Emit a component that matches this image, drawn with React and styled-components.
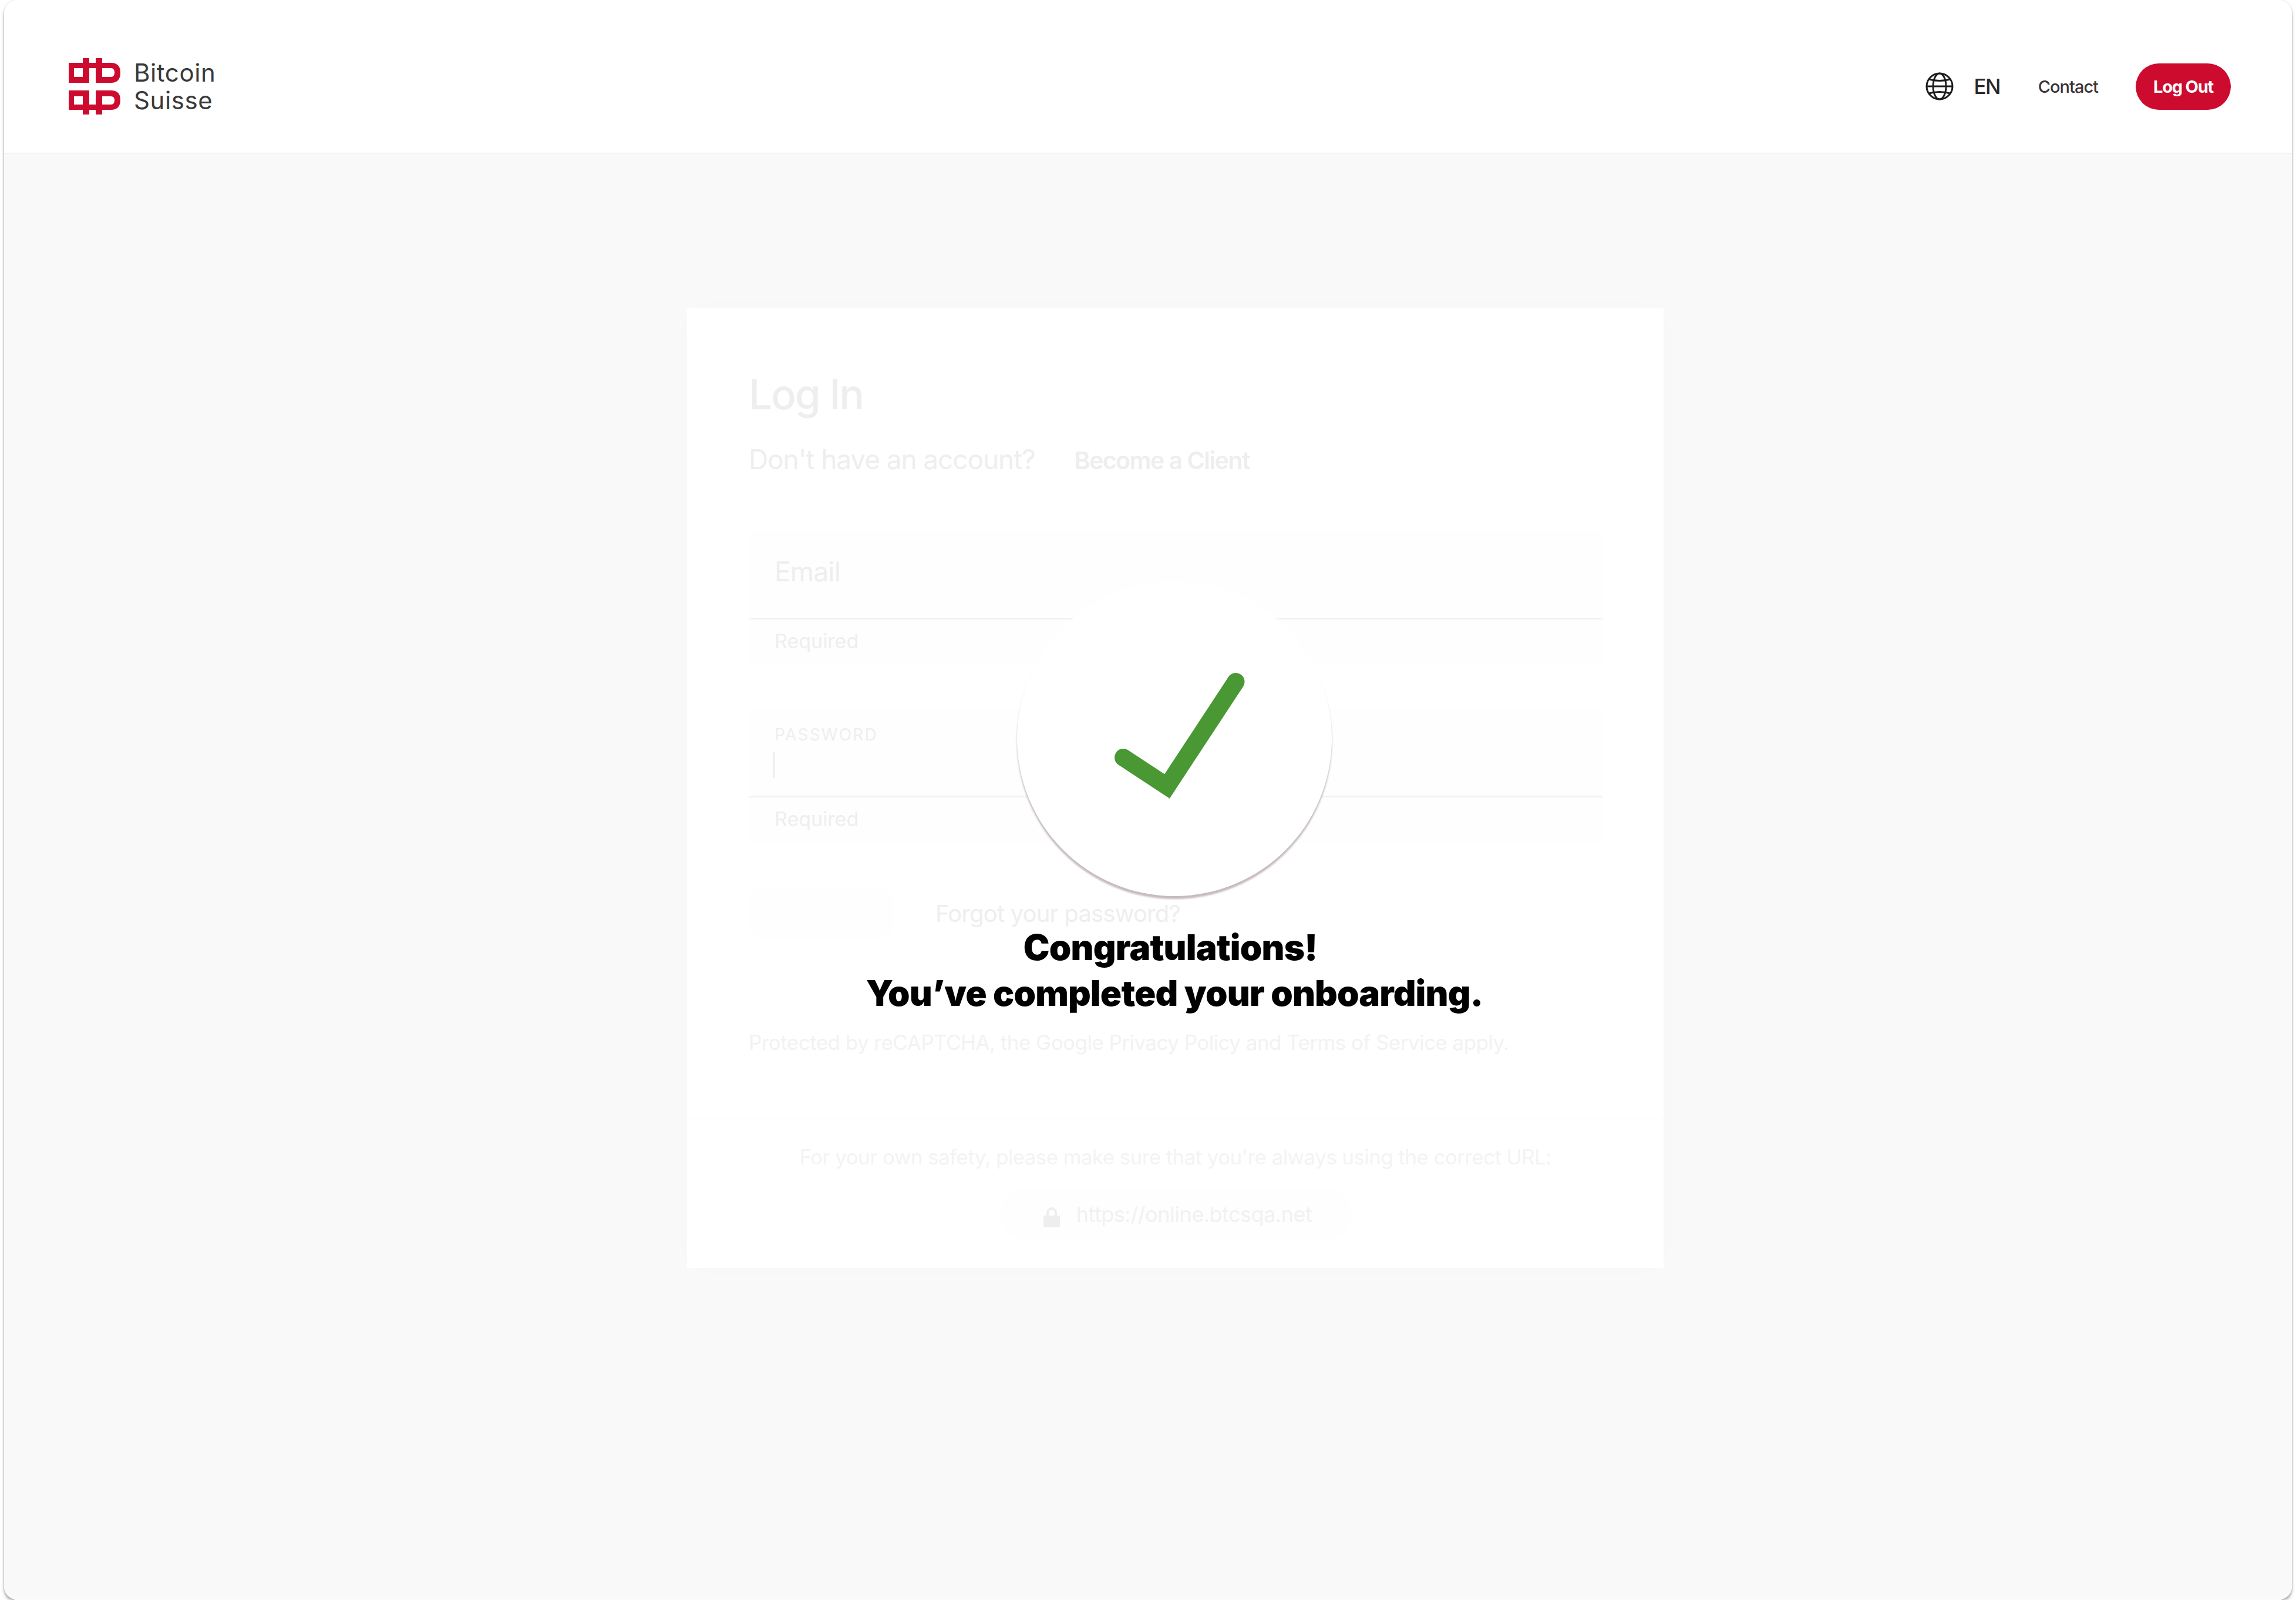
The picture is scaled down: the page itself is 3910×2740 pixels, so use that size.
import React from "react";
import styled, { createGlobalStyle } from "styled-components";

const GlobalStyle = createGlobalStyle`
  html, body {
    margin: 0;
    padding: 0;
    background: #ffffff;
  }
  body {
    font-family: Inter, "Liberation Sans", sans-serif;
  }
`;

const FrameShadow = styled.div`
  width: 3896px;
  height: 2724px;
  margin-left: 7px;
  border-radius: 22px;
  box-shadow: 0 5px 5px rgba(0, 0, 0, 0.3), 0 0 3px rgba(0, 0, 0, 0.2);
`;

const Frame = styled.div`
  position: relative;
  width: 100%;
  height: 100%;
  display: flex;
  flex-direction: column;
  border-radius: 22px;
  overflow: hidden;
  background: #f9f9f9;
`;

const Header = styled.header`
  height: 262px;
  flex: none;
  display: flex;
  align-items: center;
  padding: 34px 104px 0 110px;
  background: #ffffff;
  border-bottom: 2px solid #f3f3f3;
  box-sizing: border-box;
`;

const LogoMark = styled.svg`
  width: 88px;
  height: 96px;
  flex: none;
  display: block;
`;

const LogoText = styled.div`
  margin-left: 23px;
  font-size: 42px;
  line-height: 47px;
  letter-spacing: 0.6px;
  color: #3a3a3a;
`;

const HeaderRight = styled.nav`
  margin-left: auto;
  display: flex;
  align-items: center;
`;

const GlobeIcon = styled.svg`
  width: 50px;
  height: 50px;
  display: block;
`;

const Lang = styled.span`
  margin-left: 33px;
  font-size: 35px;
  font-weight: 500;
  letter-spacing: -1.7px;
  color: #2a2a2a;
`;

const ContactLink = styled.a`
  margin-left: 65px;
  font-size: 29px;
  font-weight: 500;
  letter-spacing: -1px;
  color: #3c3338;
`;

const LogOut = styled.button`
  margin-left: 64px;
  width: 162px;
  height: 79px;
  border: 0;
  border-radius: 40px;
  padding: 0;
  font-family: inherit;
  font-size: 29px;
  font-weight: 700;
  letter-spacing: -1.2px;
  color: #ffffff;
  background: #cd0b2f;
`;

const Main = styled.main`
  flex: 1;
  padding: 263px 0 0 1163px;
`;

const Card = styled.section`
  width: 1663px;
  height: 1634px;
  box-sizing: border-box;
  background: #ffffff;
  color: #efeeee;
  box-shadow: 0 0 60px rgba(0, 0, 0, 0.012);
  display: flex;
  flex-direction: column;
`;

const CardBody = styled.div`
  flex: 1;
  padding: 102px 104px 0 105px;
`;

const Title = styled.h1`
  margin: 0;
  font-size: 71px;
  line-height: 88px;
  font-weight: 500;
  letter-spacing: -2.2px;
`;

const SignupRow = styled.div`
  margin-top: 39px;
  display: flex;
  align-items: baseline;
  gap: 67px;
`;

const SignupText = styled.span`
  font-size: 46px;
  line-height: 56px;
  letter-spacing: -1.1px;
`;

const SignupLink = styled.a`
  font-size: 41px;
  font-weight: 600;
  letter-spacing: -1.5px;
`;

const Field = styled.div`
  height: 152px;
  margin-top: ${(p) => p.$top}px;
  padding: 0 44px;
  box-sizing: border-box;
  background: #fefefe;
  border-bottom: 3px solid #f3f2f2;
  border-radius: 14px 14px 0 0;
`;

const Placeholder = styled.div`
  padding-top: 40px;
  font-size: 46px;
  line-height: 60px;
  letter-spacing: -0.8px;
`;

const FieldLabel = styled.div`
  padding-top: 28px;
  font-size: 28px;
  line-height: 34px;
  letter-spacing: 2.2px;
`;

const Caret = styled.div`
  width: 3px;
  height: 44px;
  margin: 13px 0 0 -3px;
  background: #efedec;
`;

const Helper = styled.div`
  height: 76px;
  padding: 17px 44px 0;
  box-sizing: border-box;
  font-size: 34px;
  line-height: 40px;
  background: #fefefe;
`;

const ActionRow = styled.div`
  margin-top: 78px;
  display: flex;
  align-items: center;
`;

const GhostButton = styled.div`
  width: 243px;
  height: 86px;
  margin-left: 2px;
  border-radius: 20px;
  background: #fefefe;
`;

const ForgotLink = styled.a`
  margin-left: 73px;
  font-size: 40px;
  letter-spacing: -0.8px;
`;

const Legal = styled.p`
  margin: 155px 0 0;
  font-size: 35px;
  line-height: 44px;
  letter-spacing: -0.55px;
  color: #f3f2f2;
`;

const CardFooter = styled.div`
  height: 254px;
  flex: none;
  box-sizing: border-box;
  border-top: 2px solid #fdfdfd;
  padding-top: 41px;
  display: flex;
  flex-direction: column;
  align-items: center;
`;

const SafetyText = styled.p`
  margin: 0;
  font-size: 35px;
  line-height: 44px;
  letter-spacing: -0.6px;
  color: #f4f3f3;
`;

const UrlPill = styled.div`
  width: 598px;
  height: 89px;
  margin-top: 31px;
  padding-left: 8px;
  box-sizing: border-box;
  border-radius: 45px;
  background: #fefefe;
  display: flex;
  align-items: center;
  justify-content: center;
  gap: 28px;
`;

const LockIcon = styled.svg`
  width: 28px;
  height: 34px;
  display: block;
  margin-top: 10px;
`;

const UrlText = styled.span`
  font-size: 36px;
  letter-spacing: -0.5px;
  color: #f2f1f1;
`;

// sits over the faded login card
const SuccessOverlay = styled.div`
  position: absolute;
  left: 1293px;
  top: 990px;
  width: 1400px;
  display: flex;
  flex-direction: column;
  align-items: center;
`;

const Circle = styled.div`
  width: 536px;
  height: 536px;
  border-radius: 50%;
  background: #ffffff;
  display: flex;
  align-items: center;
  justify-content: center;
  box-shadow: 0 5px 3px rgba(120, 90, 98, 0.42);
`;

const CheckIcon = styled.svg`
  width: 536px;
  height: 536px;
  display: block;
`;

const Message = styled.div`
  margin-top: 48px;
  font-size: 60px;
  line-height: 78px;
  font-weight: 900;
  letter-spacing: -0.8px;
  text-align: center;
  color: #000000;
`;

const MessageLine = styled.div`
  padding-right: ${(p) => p.$nudge || 0}px;
`;

export default function App() {
  return (
    <>
      <GlobalStyle />
      <FrameShadow>
        <Frame>
          <Header>
            <LogoMark viewBox="0 0 88 96">
              <path
                fill="#cd0b2f"
                fillRule="evenodd"
                d="M0 8H24V0H35V8H46V0H57V8H72Q88 8 88 25Q88 42 72 42H46V17H35V42H0ZM9 17V32H24V17ZM57 17V32H72Q78 32 78 25Q78 17 72 17ZM0 55H35V79H46V55H72Q88 55 88 71Q88 88 72 88H57V96H46V88H35V96H24V88H0ZM9 65V79H24V65ZM57 65V79H72Q78 79 78 72Q78 65 72 65Z"
              />
            </LogoMark>
            <LogoText>
              Bitcoin
              <br />
              Suisse
            </LogoText>
            <HeaderRight>
              <GlobeIcon viewBox="0 0 50 50" fill="none" stroke="#1c1c1c" strokeWidth="3">
                <circle cx="25" cy="25" r="22" />
                <ellipse cx="25" cy="25" rx="11" ry="22" />
                <path d="M3 25H47M7 13Q25 18 43 13M7 37Q25 32 43 37" />
              </GlobeIcon>
              <Lang>EN</Lang>
              <ContactLink>Contact</ContactLink>
              <LogOut>Log Out</LogOut>
            </HeaderRight>
          </Header>
          <Main>
            <Card>
              <CardBody>
                <Title>Log In</Title>
                <SignupRow>
                  <SignupText>Don't have an account?</SignupText>
                  <SignupLink>Become a Client</SignupLink>
                </SignupRow>
                <Field $top={93}>
                  <Placeholder>Email</Placeholder>
                </Field>
                <Helper>Required</Helper>
                <Field $top={75}>
                  <FieldLabel>PASSWORD</FieldLabel>
                  <Caret />
                </Field>
                <Helper>Required</Helper>
                <ActionRow>
                  <GhostButton />
                  <ForgotLink>Forgot your password?</ForgotLink>
                </ActionRow>
                <Legal>Protected by reCAPTCHA, the Google Privacy Policy and Terms of Service apply.</Legal>
              </CardBody>
              <CardFooter>
                <SafetyText>For your own safety, please make sure that you're always using the correct URL:</SafetyText>
                <UrlPill>
                  <LockIcon viewBox="0 0 28 34">
                    <path
                      fill="#efeeee"
                      d="M14 0a9 9 0 0 1 9 9v5h3a2 2 0 0 1 2 2v16a2 2 0 0 1-2 2H2a2 2 0 0 1-2-2V16a2 2 0 0 1 2-2h3V9a9 9 0 0 1 9-9zm0 4a5 5 0 0 0-5 5v5h10V9a5 5 0 0 0-5-5z"
                    />
                  </LockIcon>
                  <UrlText>https://online.btcsqa.net</UrlText>
                </UrlPill>
              </CardFooter>
            </Card>
          </Main>
          <SuccessOverlay>
            <Circle>
              <CheckIcon viewBox="0 0 536 536" fill="none">
                <path
                  d="M181 300L255.500 349L372.500 171"
                  stroke="#4a9833"
                  strokeWidth="30"
                  strokeLinejoin="miter"
                  strokeLinecap="round"
                />
              </CheckIcon>
            </Circle>
            <Message>
              <MessageLine $nudge={14}>Congratulations!</MessageLine>
              <MessageLine>You’ve completed your onboarding.</MessageLine>
            </Message>
          </SuccessOverlay>
        </Frame>
      </FrameShadow>
    </>
  );
}
